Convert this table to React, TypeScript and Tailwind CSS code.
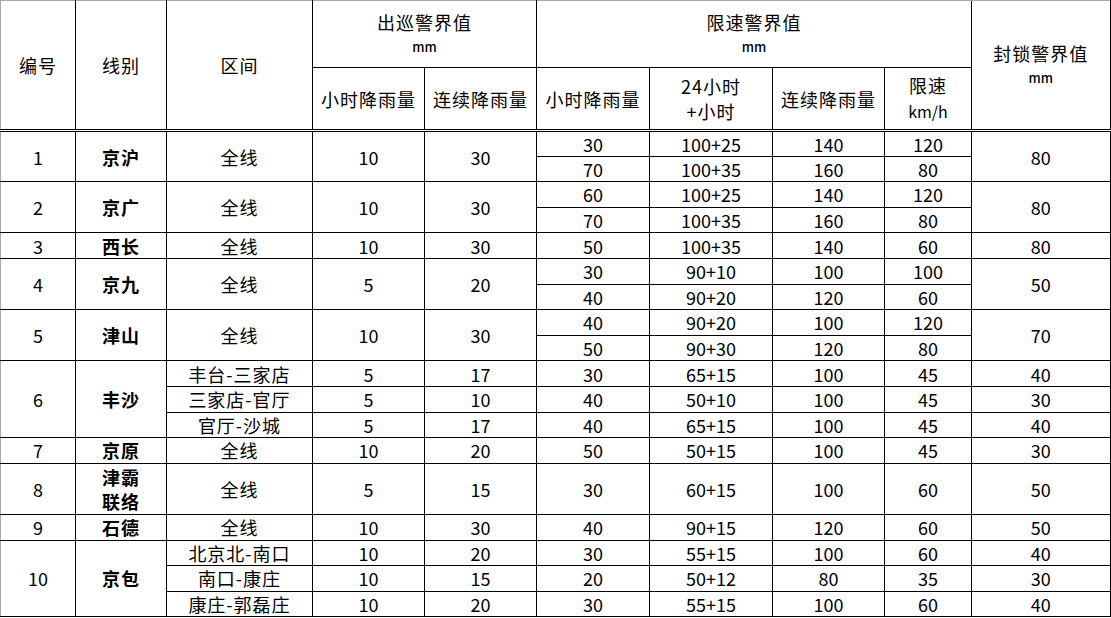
import React from 'react';

type SpanGroup = {
  kind: 'span';
  no: string;
  name: string[];
  patrol: [string, string];
  speed: string[][];
  close: string;
  tall?: boolean;
};

type SplitGroup = {
  kind: 'split';
  no: string;
  name: string[];
  rows: { section: string; patrol: [string, string]; speed: string[]; close: string }[];
};

const groups: (SpanGroup | SplitGroup)[] = [
  { kind: 'span', no: '1', name: ['京沪'], patrol: ['10', '30'], speed: [['30', '100+25', '140', '120'], ['70', '100+35', '160', '80']], close: '80' },
  { kind: 'span', no: '2', name: ['京广'], patrol: ['10', '30'], speed: [['60', '100+25', '140', '120'], ['70', '100+35', '160', '80']], close: '80' },
  { kind: 'span', no: '3', name: ['西长'], patrol: ['10', '30'], speed: [['50', '100+35', '140', '60']], close: '80' },
  { kind: 'span', no: '4', name: ['京九'], patrol: ['5', '20'], speed: [['30', '90+10', '100', '100'], ['40', '90+20', '120', '60']], close: '50' },
  { kind: 'span', no: '5', name: ['津山'], patrol: ['10', '30'], speed: [['40', '90+20', '100', '120'], ['50', '90+30', '120', '80']], close: '70' },
  {
    kind: 'split',
    no: '6',
    name: ['丰沙'],
    rows: [
      { section: '丰台-三家店', patrol: ['5', '17'], speed: ['30', '65+15', '100', '45'], close: '40' },
      { section: '三家店-官厅', patrol: ['5', '10'], speed: ['40', '50+10', '100', '45'], close: '30' },
      { section: '官厅-沙城', patrol: ['5', '17'], speed: ['40', '65+15', '100', '45'], close: '40' },
    ],
  },
  { kind: 'span', no: '7', name: ['京原'], patrol: ['10', '20'], speed: [['50', '50+15', '100', '45']], close: '30' },
  { kind: 'span', no: '8', name: ['津霸', '联络'], patrol: ['5', '15'], speed: [['30', '60+15', '100', '60']], close: '50', tall: true },
  { kind: 'span', no: '9', name: ['石德'], patrol: ['10', '30'], speed: [['40', '90+15', '120', '60']], close: '50' },
  {
    kind: 'split',
    no: '10',
    name: ['京包'],
    rows: [
      { section: '北京北-南口', patrol: ['10', '20'], speed: ['30', '55+15', '100', '60'], close: '40' },
      { section: '南口-康庄', patrol: ['10', '15'], speed: ['20', '50+12', '80', '35'], close: '30' },
      { section: '康庄-郭磊庄', patrol: ['10', '20'], speed: ['30', '55+15', '100', '60'], close: '40' },
    ],
  },
];

const td = 'border border-black p-0 text-center align-middle leading-[20px]';
const first = 'border-l-[#a8a8a8]';
const last = 'border-r-2';
const hd = `${td} border-double border-b-[3px] tracking-[1px]`;

const Name = ({ lines }: { lines: string[] }) => (
  <>
    {lines.map((l) => (
      <div key={l} className="leading-[24px]">{l}</div>
    ))}
  </>
);

export default function App() {
  return (
    <div className="w-[1111px] h-[618px] bg-white overflow-hidden">
      <table
        className="table-fixed border-collapse w-[1110px] text-black text-[18px]"
        style={{ fontFamily: '"Noto Sans CJK SC", "Noto Sans", sans-serif' }}
      >
        <colgroup>
          <col className="w-[75px]" />
          <col className="w-[91px]" />
          <col className="w-[146px]" />
          <col className="w-[112px]" />
          <col className="w-[112px]" />
          <col className="w-[113px]" />
          <col className="w-[123px]" />
          <col className="w-[112px]" />
          <col className="w-[87px]" />
          <col className="w-[139px]" />
        </colgroup>
        <thead>
          <tr className="h-[67px]">
            <th rowSpan={2} className={`${hd} ${first} border-t-[#a8a8a8] font-normal`}>编号</th>
            <th rowSpan={2} className={`${hd} border-t-[#a8a8a8] font-normal`}>线别</th>
            <th rowSpan={2} className={`${hd} border-t-[#a8a8a8] font-normal`}>区间</th>
            <th colSpan={2} className={`${td} border-t-[#a8a8a8] font-normal tracking-[1px]`}>
              <div className="leading-[26px]">出巡警界值</div>
              <div className="text-[13px] leading-[24px] font-medium tracking-normal">mm</div>
            </th>
            <th colSpan={4} className={`${td} border-t-[#a8a8a8] font-normal tracking-[1px]`}>
              <div className="leading-[26px]">限速警界值</div>
              <div className="text-[13px] leading-[24px] font-medium tracking-normal">mm</div>
            </th>
            <th rowSpan={2} className={`${hd} ${last} border-t-[#a8a8a8] font-normal`}>
              <div className="leading-[26px]">封锁警界值</div>
              <div className="text-[13px] leading-[24px] font-medium tracking-normal">mm</div>
            </th>
          </tr>
          <tr className="h-[63px]">
            <th className={`${hd} font-normal`}>小时降雨量</th>
            <th className={`${hd} font-normal`}>连续降雨量</th>
            <th className={`${hd} font-normal`}>小时降雨量</th>
            <th className={`${hd} font-normal`}>
              <div className="leading-[25px]">24小时</div>
              <div className="leading-[25px]">+小时</div>
            </th>
            <th className={`${hd} font-normal`}>连续降雨量</th>
            <th className={`${hd} font-normal`}>
              <div className="leading-[25px]">限速</div>
              <div className="text-[16px] leading-[27px] tracking-normal">km/h</div>
            </th>
          </tr>
        </thead>
        <tbody>
          {groups.map((g) =>
            g.kind === 'span'
              ? g.speed.map((s, i) => (
                  <tr key={`${g.no}-${i}`} className={g.tall ? 'h-[51.2px]' : 'h-[25.6px]'}>
                    {i === 0 && (
                      <>
                        <td rowSpan={g.speed.length} className={`${td} ${first}`}>{g.no}</td>
                        <td rowSpan={g.speed.length} className={`${td} font-bold tracking-[1px]`}>
                          <Name lines={g.name} />
                        </td>
                        <td rowSpan={g.speed.length} className={`${td} tracking-[1px]`}>全线</td>
                        <td rowSpan={g.speed.length} className={td}>{g.patrol[0]}</td>
                        <td rowSpan={g.speed.length} className={td}>{g.patrol[1]}</td>
                      </>
                    )}
                    {s.map((v, k) => (
                      <td key={k} className={td}>{v}</td>
                    ))}
                    {i === 0 && (
                      <td rowSpan={g.speed.length} className={`${td} ${last}`}>{g.close}</td>
                    )}
                  </tr>
                ))
              : g.rows.map((r, i) => (
                  <tr key={`${g.no}-${i}`} className="h-[25.6px]">
                    {i === 0 && (
                      <>
                        <td rowSpan={g.rows.length} className={`${td} ${first}`}>{g.no}</td>
                        <td rowSpan={g.rows.length} className={`${td} font-bold tracking-[1px]`}>
                          <Name lines={g.name} />
                        </td>
                      </>
                    )}
                    <td className={`${td} tracking-[1px]`}>{r.section}</td>
                    <td className={td}>{r.patrol[0]}</td>
                    <td className={td}>{r.patrol[1]}</td>
                    {r.speed.map((v, k) => (
                      <td key={k} className={td}>{v}</td>
                    ))}
                    <td className={`${td} ${last}`}>{r.close}</td>
                  </tr>
                ))
          )}
        </tbody>
      </table>
    </div>
  );
}
